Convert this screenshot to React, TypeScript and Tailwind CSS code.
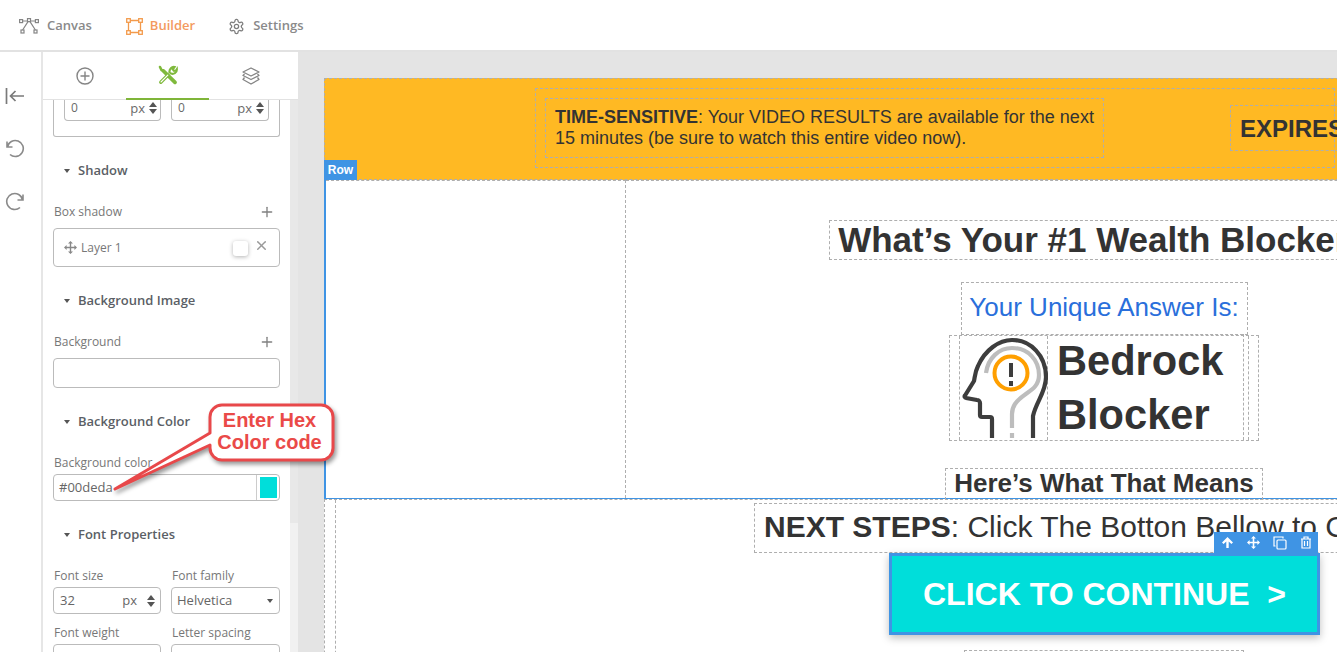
import { Plus, X } from 'lucide-react'

const DASH = 'border border-dashed border-[#aeaeae]'

function Spin() {
  return (
    <span className="flex flex-col gap-[2px]">
      <span className="w-0 h-0 border-x-[4px] border-x-transparent border-b-[5px] border-b-[#555]" />
      <span className="w-0 h-0 border-x-[4px] border-x-transparent border-t-[5px] border-t-[#555]" />
    </span>
  )
}

function Heading({ label, className }: { label: string; className: string }) {
  return (
    <div className={`flex items-center gap-[8px] pl-[21px] text-[13px] font-semibold text-[#5b5f66] ${className}`}>
      <span className="w-0 h-0 border-x-[3.5px] border-x-transparent border-t-[4px] border-t-[#555]" />
      {label}
    </div>
  )
}

function NavIcon({ kind }: { kind: 'canvas' | 'builder' }) {
  if (kind === 'canvas') {
    return (
      <svg width="20" height="16" viewBox="0 0 20 16" fill="none" stroke="#858585" strokeWidth="1.2">
        <rect x="0.6" y="1.6" width="3" height="3" />
        <rect x="16.4" y="1.6" width="3" height="3" />
        <rect x="8.5" y="0.6" width="3" height="3" />
        <rect x="2" y="12" width="3" height="3" />
        <rect x="15" y="12" width="3" height="3" />
        <path d="M3.6 3h4.9M11.5 3h4.9M9 3.6 3.6 12M11 3.6l5.4 8.4" />
      </svg>
    )
  }
  return (
    <svg width="17" height="17" viewBox="0 0 17 17" fill="none" stroke="#f39a4b" strokeWidth="1.3">
      <rect x="0.7" y="0.7" width="3.6" height="3.6" />
      <rect x="12.7" y="0.7" width="3.6" height="3.6" />
      <rect x="0.7" y="12.7" width="3.6" height="3.6" />
      <rect x="12.7" y="12.7" width="3.6" height="3.6" />
      <path d="M4.3 2.500h8.400M4.300 14.500h8.400M2.500 4.300v8.400M14.500 4.300v8.400" />
    </svg>
  )
}

function TopBar() {
  return (
    <div className="h-[52px] shrink-0 flex items-center bg-white border-b-2 border-[#e2e2e2] pl-[19px] pt-[2px] text-[13px] font-semibold text-[#8a8a8a]">
      <NavIcon kind="canvas" />
      <span className="ml-[8px]">Canvas</span>
      <span className="ml-[34px] flex"><NavIcon kind="builder" /></span>
      <span className="ml-[7px] text-[#f39a60]">Builder</span>
      <svg className="ml-[33px]" width="17" height="17" viewBox="0 0 24 24" fill="none" stroke="#7d7d7d" strokeWidth="1.800">
        <path d="M12.200 2h-.4a2 2 0 0 0-2 2v.2a2 2 0 0 1-1 1.700l-.4.3a2 2 0 0 1-2 0l-.2-.1a2 2 0 0 0-2.700.7l-.2.4a2 2 0 0 0 .7 2.700l.2.1a2 2 0 0 1 1 1.700v.5a2 2 0 0 1-1 1.800l-.2.1a2 2 0 0 0-.7 2.700l.2.4a2 2 0 0 0 2.700.7l.2-.1a2 2 0 0 1 2 0l.4.3a2 2 0 0 1 1 1.700v.2a2 2 0 0 0 2 2h.4a2 2 0 0 0 2-2v-.2a2 2 0 0 1 1-1.700l.4-.3a2 2 0 0 1 2 0l.2.1a2 2 0 0 0 2.700-.7l.2-.4a2 2 0 0 0-.7-2.700l-.2-.1a2 2 0 0 1-1-1.800v-.5a2 2 0 0 1 1-1.700l.2-.1a2 2 0 0 0 .7-2.700l-.2-.4a2 2 0 0 0-2.700-.7l-.2.1a2 2 0 0 1-2 0l-.4-.3a2 2 0 0 1-1-1.700V4a2 2 0 0 0-2-2z" />
        <circle cx="12" cy="12" r="3" />
      </svg>
      <span className="ml-[8px]">Settings</span>
    </div>
  )
}

function Rail() {
  return (
    <div className="w-[43px] shrink-0 bg-white border-r-2 border-[#e6e6e6] flex flex-col items-start pl-[5px] pt-[35px] gap-[33px]">
      <svg width="19" height="18" viewBox="0 0 19 18" fill="none" stroke="#7a7a7a" strokeWidth="1.700">
        <path d="M1.500 1v16M19 9H5.500M10.500 4 5.500 9l5 5" />
      </svg>
      <svg className="mt-px" width="20" height="20" viewBox="0 0 20 20" fill="none" stroke="#8a8a8a" strokeWidth="1.600">
        <path d="M2 2.500v5.500h5.500M2.400 8A8 8 0 1 1 5 15.500" />
      </svg>
      <svg width="20" height="20" viewBox="0 0 20 20" fill="none" stroke="#8a8a8a" strokeWidth="1.600">
        <path d="M18 2.500v5.500h-5.500M17.600 8A8 8 0 1 0 15 15.500" />
      </svg>
    </div>
  )
}

function PanelTabs() {
  return (
    <div className="h-[48px] flex bg-white border-b border-[#e2e2e2] w-[255px] shrink-0">
      <div className="w-[83px] flex items-center justify-center">
        <svg width="18" height="18" viewBox="0 0 18 18" fill="none" stroke="#858585" strokeWidth="1.400">
          <circle cx="9" cy="9" r="8" />
          <path d="M9 4.500v9M4.500 9h9" />
        </svg>
      </div>
      <div className="w-[83px] flex items-center justify-center border-b-2 border-[#7fb539] h-[48px]">
        <svg width="20" height="20" viewBox="0 0 20 20" fill="none" stroke="#7fb93c" strokeLinecap="round">
          <path d="M2 2 3.500 5l2 1" strokeWidth="2.600" />
          <path d="M5.500 6 17 17.300" strokeWidth="3.800" />
          <path d="M2.800 17.300 10 10" strokeWidth="3.400" />
          <path d="M3 17 9.800 10.200" stroke="#fff" strokeWidth="1.100" />
          <path d="M11.500 7.500C11 4 14 1.500 16.500 2L14.800 4.300l1 1.500 2 .1 1-1.500C19 8 15.500 9.500 13 8.500" strokeWidth="2.200" />
        </svg>
      </div>
      <div className="flex-1 flex items-center justify-center pr-[5px]">
        <svg width="18" height="18" viewBox="0 0 18 18" fill="none" stroke="#858585" strokeWidth="1.300" strokeLinejoin="round">
          <path d="M9 1 17 5l-8 4-8-4zM2.500 7 1 8.500l8 4 8-4L15.500 7M2.500 10.500 1 12.500l8 4.500 8-4.500-1.500-2" />
        </svg>
      </div>
    </div>
  )
}

function Panel() {
  const box = 'border border-[#bbb] rounded-[4px] bg-white'
  const label = 'text-[12px] text-[#777] pl-px'
  return (
    <div className="w-[255px] shrink-0 flex flex-col bg-white overflow-hidden">
      <PanelTabs />
      <div className="flex-1 flex overflow-hidden">
        <div className="w-[247px] text-[12px] text-[#6a6a6a] overflow-hidden">
          <div className="ml-[10px] w-[227px] h-[37px] border border-t-0 border-[#bbb] rounded-b-[3px] pl-[10px] flex gap-[10px]">
            <div className="w-[97px] h-[21px] border border-t-0 border-[#bbb] rounded-b-[4px] flex items-center pl-[6px] pr-[3px] pb-[5px] leading-[14px]">
              <span className="flex-1">0</span><span className="mr-[4px] text-[13px] leading-[14px]">px</span><Spin />
            </div>
            <div className="w-[98px] h-[21px] border border-t-0 border-[#bbb] rounded-b-[4px] flex items-center pl-[6px] pr-[4px] pb-[5px] leading-[14px]">
              <span className="flex-1">0</span><span className="mr-[4px] text-[13px] leading-[14px]">px</span><Spin />
            </div>
          </div>
          <Heading label="Shadow" className="mt-[25px] h-[18px]" />
          <div className="mt-[23px] ml-[10px] w-[227px] flex items-center justify-between h-[18px]">
            <span className={label}>Box shadow</span>
            <Plus size={16} strokeWidth={2} className="text-[#808080] mr-[5px]" />
          </div>
          <div className={`${box} mt-[7px] ml-[10px] w-[227px] h-[39px] flex items-center pl-[10px] pr-[10px]`}>
            <svg width="13" height="13" viewBox="0 0 13 13" fill="#888" className="mr-[4px]">
              <path d="M6.500 0 9 2.600H7.200V5.800h3.200V4L13 6.500 10.400 9V7.200H7.200v3.200H9L6.500 13 4 10.400h1.800V7.200H2.600V9L0 6.500 2.600 4v1.800h3.200V2.600H4z" />
            </svg>
            <span className="text-[12px] flex-1 text-[#777]">Layer 1</span>
            <span className="w-[15px] h-[15px] rounded-[3px] bg-white shadow-[0_1px_4px_rgba(0,0,0,0.3)] mr-[6px] mt-[2px]" />
            <X size={15} strokeWidth={2.400} className="text-[#999] mb-[4px]" />
          </div>
          <Heading label="Background Image" className="mt-[25px] h-[18px]" />
          <div className="mt-[23px] ml-[10px] w-[227px] flex items-center justify-between h-[18px]">
            <span className={label}>Background</span>
            <Plus size={16} strokeWidth={2} className="text-[#808080] mr-[5px]" />
          </div>
          <div className={`${box} mt-[7px] ml-[10px] w-[227px] h-[30px]`} />
          <Heading label="Background Color" className="mt-[25px] h-[18px]" />
          <div className="mt-[23px] ml-[10px] h-[18px] flex items-center"><span className={label}>Background color</span></div>
          <div className={`${box} mt-[2px] ml-[10px] w-[227px] h-[27px] flex items-center pl-[5px]`}>
            <span className="flex-1 text-[13px] text-[#666]">#00deda</span>
            <span className="w-[23px] h-full border-l border-[#ccc] flex items-center justify-end pr-[2px]">
              <span className="w-[17px] h-[21px] bg-[#00deda]" />
            </span>
          </div>
          <Heading label="Font Properties" className="mt-[25px] h-[18px]" />
          <div className="mt-[23px] ml-[10px] w-[227px] grid grid-cols-[108px_109px] gap-x-[10px]">
            <span className={`${label} h-[18px] flex items-center`}>Font size</span>
            <span className={`${label} h-[18px] flex items-center`}>Font family</span>
            <div className={`${box} mt-[2px] h-[27px] flex items-center pl-[6px] pr-[5px] text-[13px] text-[#666]`}>
              <span className="flex-1">32</span><span className="mr-[10px]">px</span><Spin />
            </div>
            <div className={`${box} mt-[2px] h-[27px] flex items-center pl-[5px] pr-[6px] text-[13px] text-[#666]`}>
              <span className="flex-1">Helvetica</span>
              <span className="w-0 h-0 border-x-[3.500px] border-x-transparent border-t-[4px] border-t-[#555]" />
            </div>
            <span className={`${label} mt-[10px] h-[18px] flex items-center`}>Font weight</span>
            <span className={`${label} mt-[10px] h-[18px] flex items-center`}>Letter spacing</span>
            <div className={`${box} mt-[2px] h-[27px]`} />
            <div className={`${box} mt-[2px] h-[27px]`} />
          </div>
        </div>
        <div className="w-[8px] flex flex-col">
          <div className="h-[423px] bg-[#e8e8e8]" />
          <div className="flex-1 bg-[#f1f1f1]" />
        </div>
      </div>
    </div>
  )
}

function HeadIcon() {
  return (
    <svg width="87" height="104" viewBox="0 0 87 104" fill="none" className="shrink-0">
      <path d="M31 102V83a2 2 0 0 0-2-2H21a2 2 0 0 1-2-2V67a3 3 0 0 0-3-3L5 62a1.500 1.500 0 0 1-1-2.500L13 45C14 40 14 36 17 30 24 14 38 4 51 4 70 4 85 20 85 41 85 56 75 66 72 80V102" stroke="#3d3d3d" strokeWidth="4.200" strokeLinejoin="round" />
      <path d="M25 37C27 22 38 12 51 12 67 12 78 24 78 39 78 55 62 56 54 68 52 71 51 74 51 78V92" stroke="#bdbdbd" strokeWidth="4.200" />
      <path d="M51 97V102" stroke="#bdbdbd" strokeWidth="4.200" />
      <circle cx="50" cy="37" r="16.500" stroke="#ff9f00" strokeWidth="4" />
      <path d="M50 27v14M50 45v5" stroke="#3d3d3d" strokeWidth="4" />
    </svg>
  )
}

function ButtonToolbar() {
  return (
    <div className="absolute -right-px -top-[24px] w-[104px] h-[21px] bg-[#3f94e4] flex items-center justify-around text-white">
      <svg width="13" height="13" viewBox="0 0 13 13" fill="white"><path d="M6.500 1 12 6.500l-1.600 1.600-2.700-2.600V12H5.300V5.500L2.600 8.100 1 6.500z" /></svg>
      <svg width="13" height="13" viewBox="0 0 13 13" fill="white"><path d="M6.500 0 9 2.600H7.300V5.700h3.100V4L13 6.500 10.400 9V7.300H7.300v3.100H9L6.500 13 4 10.400h1.700V7.300H2.600V9L0 6.500 2.600 4v1.700h3.100V2.600H4z" /></svg>
      <svg width="14" height="14" viewBox="0 0 14 14" fill="none" stroke="white" strokeWidth="1.200"><rect x="4" y="4" width="9" height="9" rx="1" /><path d="M2.500 10H1V1h9v1.500" /></svg>
      <svg width="12" height="13" viewBox="0 0 12 13" fill="none" stroke="white" strokeWidth="1.200"><path d="M1 3h10M4 3V1h4v2M2 3v9h8V3M4.500 5v5M7.500 5v5" /></svg>
    </div>
  )
}

function PageCanvas() {
  return (
    <div className="flex-1 min-w-0 bg-[#e4e4e4] pl-[26px] pt-[26px] overflow-hidden">
      <div className="w-[1260px] bg-white font-['Liberation_Sans',Arial,sans-serif] text-[#333]">
        <div className={`relative h-[102px] bg-[#ffb923] ${DASH} flex pl-[210px] pt-[9px]`}>
          <div className={`w-[800px] h-[80px] ${DASH} shrink-0 pl-[9px] pt-[9px] flex`}>
            <div className={`w-[559px] h-[60px] ${DASH} shrink-0 pl-[9px] pt-[8px] text-[18px] leading-[21px] whitespace-nowrap`}>
              <b>TIME-SENSITIVE</b>: Your VIDEO RESULTS are available for the next<br />
              15 minutes (be sure to watch this entire video now).
            </div>
            <div className={`ml-[126px] mt-[7px] h-[46px] w-[300px] ${DASH} pl-[9px] pt-[2px] flex items-center text-[24px] font-bold shrink-0`}>
              EXPIRES
            </div>
          </div>
          <span className="absolute -left-px -bottom-px h-[20px] w-[33px] bg-[#3f94e4] text-white text-[12px] font-bold flex items-center justify-center">Row</span>
        </div>
        <div className="h-[319px] flex border-l-2 border-b border-[#3f94e4]">
          <div className="w-[300px] border-r border-t border-dashed border-[#aeaeae]" />
          <div className="w-[956px] border-t border-dashed border-[#aeaeae] flex flex-col items-center pt-[39px]">
            <div className={`${DASH} h-[40px] px-[8px] shrink-0 flex items-center text-[35px] font-bold whitespace-nowrap`}>What’s Your #1 Wealth Blocker?</div>
            <div className={`${DASH} mt-[22px] h-[53px] w-[287px] pb-[2px] shrink-0 flex items-center justify-center text-[26px] text-[#2a6fdb] whitespace-nowrap`}>Your Unique Answer Is:</div>
            <div className={`${DASH} w-[310px] h-[106px] px-[9px] shrink-0`}>
              <div className={`${DASH} border-y-0 h-full flex`}>
                <div className="w-[88px] pl-[1px] flex items-end border-r border-dashed border-[#aeaeae] shrink-0"><HeadIcon /></div>
                <div className="w-[196px] pl-[9px] text-[41.600px] font-bold leading-[54px] -mt-[2px] border-r border-dashed border-[#aeaeae]">Bedrock<br />Blocker</div>
              </div>
            </div>
            <div className={`${DASH} mt-[27px] h-[32px] w-[318px] pb-[2px] flex items-center justify-center text-[26px] font-bold whitespace-nowrap shrink-0`}>Here’s What That Means</div>
          </div>
        </div>
        <div className="h-[200px] pl-[10px] border-l border-t border-dashed border-[#aeaeae]">
          <div className="border-l border-dashed border-[#aeaeae] h-full flex flex-col items-start w-[1240px] pt-[3px]">
            <div className={`${DASH} ml-[418px] h-[50px] w-[700px] flex items-center pl-[9px] pb-[3px] text-[30px] whitespace-nowrap overflow-hidden shrink-0`}>
              <span><b>NEXT STEPS</b>: Click The Botton Bellow to Continue</span>
            </div>
            <div className="relative ml-[553px] w-[431px] h-[82px] bg-[#00deda] border-[3px] border-[#3f94e4] shadow-[0_3px_8px_rgba(0,0,0,0.25)] flex items-center justify-center text-white text-[32px] font-bold whitespace-pre shrink-0">
              CLICK TO CONTINUE  &gt;
              <ButtonToolbar />
            </div>
            <div className={`${DASH} ml-[628px] mt-[15px] w-[280px] h-[40px] shrink-0`} />
          </div>
        </div>
      </div>
    </div>
  )
}

export default function App() {
  return (
    <div className="relative w-[1337px] h-[652px] overflow-hidden bg-white flex flex-col font-['Open_Sans',sans-serif]">
      <TopBar />
      <div className="flex-1 flex min-h-0">
        <Rail />
        <Panel />
        <PageCanvas />
      </div>
      <svg className="absolute left-[110px] top-[400px] pointer-events-none drop-shadow-[2px_3px_2px_rgba(0,0,0,0.4)]" width="230" height="100" viewBox="0 0 230 100">
        <path d="M5 89 100 33V17A12 12 0 0 1 112 5h99a12 12 0 0 1 12 12v31a12 12 0 0 1-12 12h-99a12 12 0 0 1-12-12v-3z" fill="#fff" stroke="#e8484a" strokeWidth="3" strokeLinejoin="round" />
      </svg>
      <div className="absolute left-[208px] top-[409px] w-[123px] text-center text-[#ea4a48] text-[20px] leading-[22px] font-bold font-['Liberation_Sans',Arial,sans-serif] pointer-events-none">
        Enter Hex<br />Color code
      </div>
    </div>
  )
}
